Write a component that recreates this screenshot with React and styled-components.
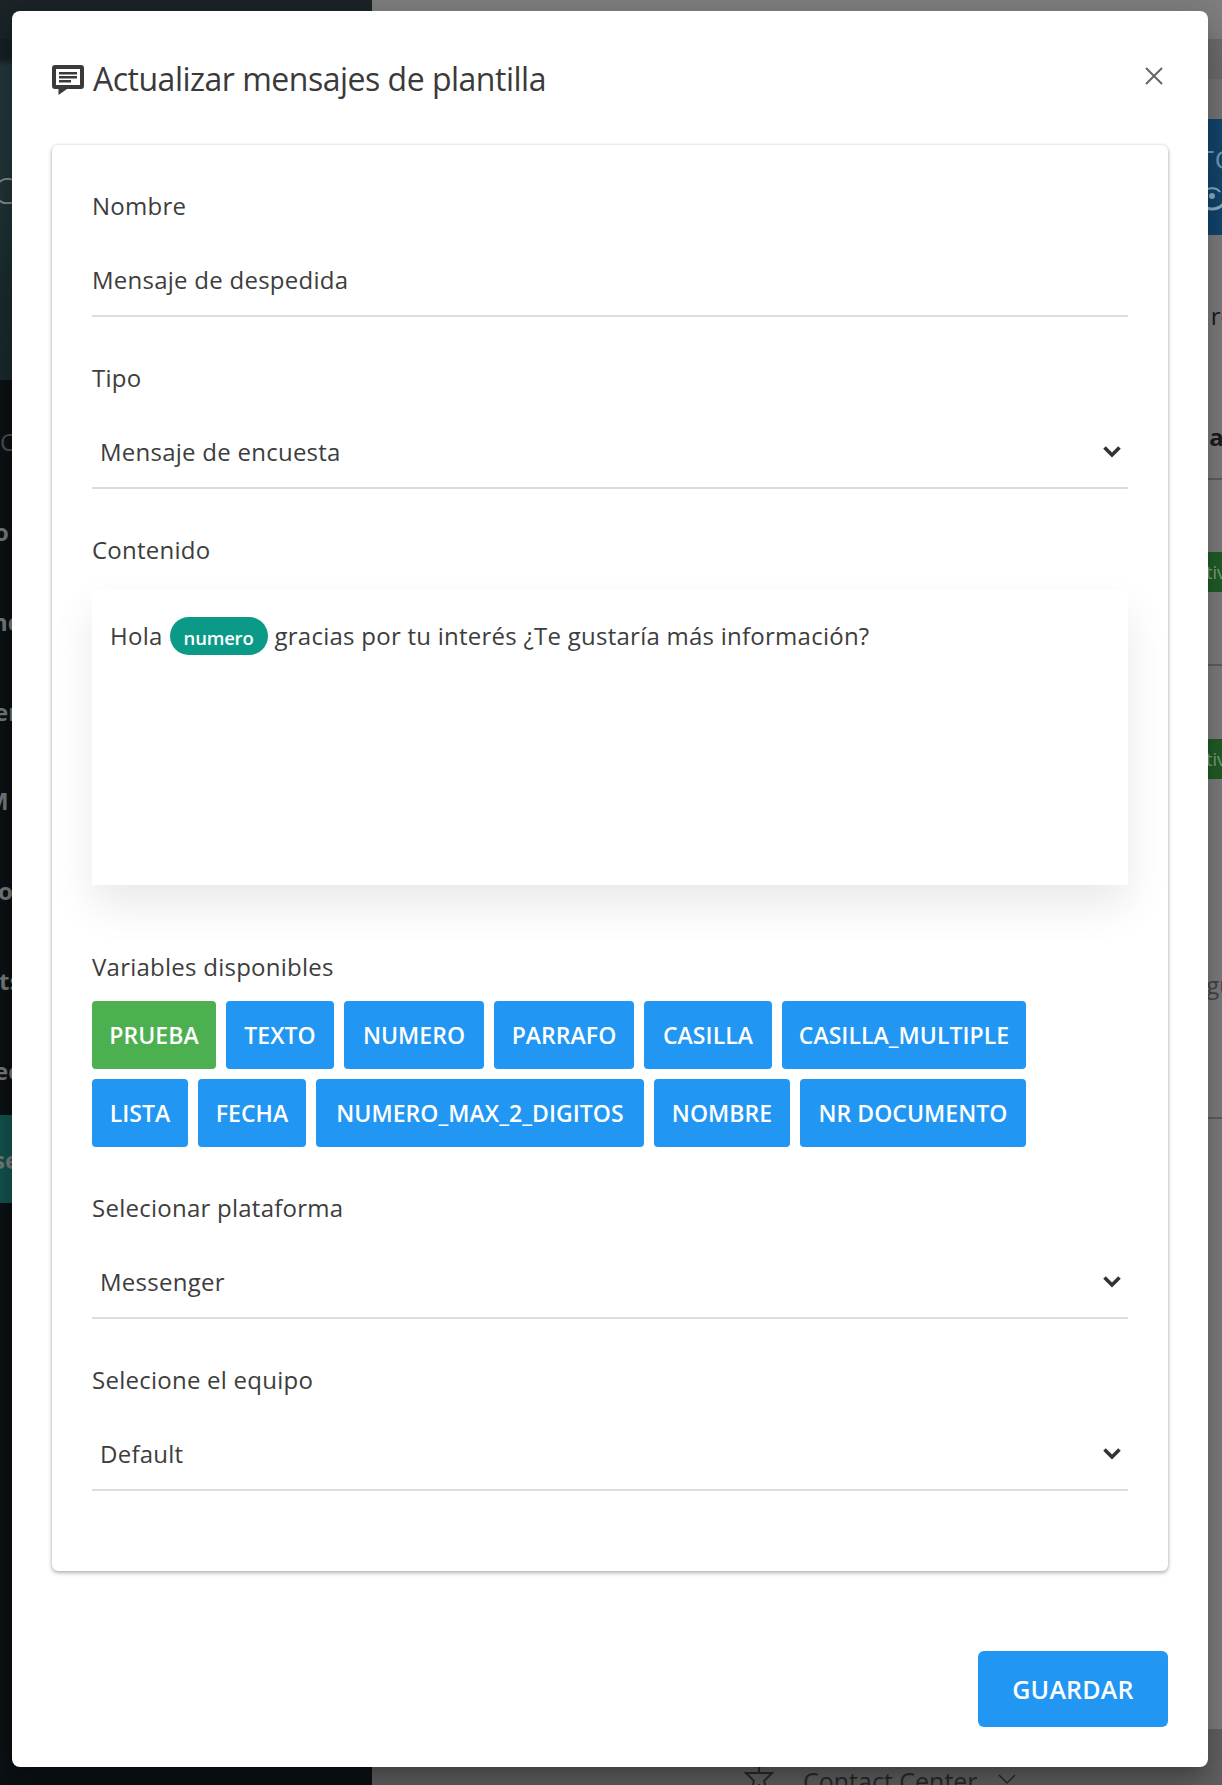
import React from 'react'
import styled, { createGlobalStyle } from 'styled-components'

const GlobalStyle = createGlobalStyle`
  html, body { margin: 0; padding: 0; height: 1785px; overflow: hidden; background: #7f7f7f; }
  * { box-sizing: border-box; }
`

const Page = styled.div`
  position: relative;
  display: grid;
  grid-template-columns: 372px 1fr;
  width: 1222px;
  height: 1785px;
  overflow: hidden;
  font-family: "Open Sans", "Liberation Sans", sans-serif;
`

const Sidebar = styled.aside`
  background: #0c1215;
  display: flex;
  flex-direction: column;
`

const SideHero = styled.div`
  height: 380px;
  padding-top: 165px;
  background: linear-gradient(#1b2427 0 39px, #162023 39px 58px, #23383c 66px, #223639 180px, #1b2d2f 290px, #1a2a2c);
  color: #8a8f8f;
  font-size: 36px;
  font-weight: 300;
  line-height: 52px;
  text-indent: -7px;
`

const SideList = styled.div`
  padding-top: 17px;
  display: flex;
  flex-direction: column;
`

const SideItem = styled.div`
  height: ${(p) => (p.$active ? 88 : 89.75)}px;
  display: flex;
  align-items: center;
  background: ${(p) => (p.$active ? '#13544d' : 'transparent')};
`

const SideText = styled.span`
  font-size: 24px;
  font-weight: ${(p) => (p.$dim ? 400 : 700)};
  color: ${(p) => (p.$dim ? '#4d5254' : '#777c7d')};
  margin-left: ${(p) => p.$offset}px;
  white-space: nowrap;
`

const Main = styled.main`
  display: flex;
  flex-direction: column;
  background: #7f7f7f;
  overflow: hidden;
`

const TopStrip = styled.div`
  height: ${(p) => p.$h}px;
  background: ${(p) => p.$bg};
`

const BlueBand = styled.div`
  height: 116px;
  background: #13476f;
  padding: 22px 0 0;
  display: flex;
  flex-direction: column;
  align-items: flex-end;
  color: #7a9db6;
  font-size: 26px;
  line-height: 36px;
  overflow: hidden;
`

const BandText = styled.span`
  margin-right: -14px;
  letter-spacing: 1px;
`

const BandIcon = styled.svg`
  margin: 10px -6px 0 0;
`

const TableRow = styled.div`
  height: ${(p) => p.$h}px;
  flex: none;
  border-bottom: ${(p) => (p.$line ? '2px solid #606060' : '0')};
  display: flex;
  align-items: center;
  justify-content: flex-end;
  font-size: 24px;
  font-weight: ${(p) => (p.$bold ? 700 : 400)};
  color: ${(p) => p.$color || '#1c1c1c'};
  overflow: hidden;
`

const CutText = styled.span`
  margin-right: ${(p) => p.$cut}px;
`

const Status = styled.span`
  height: 40px;
  margin-right: -4px;
  padding-left: 24px;
  background: #215f28;
  color: #83a386;
  font-size: 18px;
  line-height: 40px;
`

const BottomBar = styled.div`
  margin-top: auto;
  height: 56px;
  flex: none;
  background: #636363;
  display: flex;
  align-items: flex-start;
  padding: 36px 0 0 372px;
  color: #2b2b2b;
  font-size: 25px;
  line-height: 32px;
`

const BottomIcon = styled.svg`
  margin-top: -2px;
  margin-right: 29px;
`

const BottomChevron = styled.svg`
  margin: 8px 0 0 20px;
`

const Modal = styled.section`
  position: absolute;
  left: 12px;
  top: 11px;
  width: 1196px;
  height: 1756px;
  background: #fff;
  border-radius: 8px;
  box-shadow: 0 11px 15px -7px rgba(0,0,0,.2), 0 24px 38px 3px rgba(0,0,0,.14), 0 9px 46px 8px rgba(0,0,0,.12);
  padding: 0 40px;
  display: flex;
  flex-direction: column;
  color: #3a3a3a;
`

const ModalHeader = styled.header`
  height: 134px;
  flex: none;
  padding-top: 49px;
  display: flex;
  align-items: flex-start;
  justify-content: space-between;
`

const Title = styled.h2`
  margin: 0;
  display: flex;
  align-items: center;
  gap: 9px;
  font-size: 32px;
  line-height: 38px;
  font-weight: 400;
  letter-spacing: -0.5px;
  color: #3a3a3a;
`

const TitleIcon = styled.svg`
  margin-top: 2px;
  flex: none;
`

const CloseButton = styled.button`
  border: 0;
  background: none;
  padding: 0;
  margin: 7px 5px 0 0;
  width: 18px;
  height: 18px;
  display: block;
  color: #666;
`

const Card = styled.div`
  height: 1426px;
  flex: none;
  background: #fff;
  border-radius: 6px;
  box-shadow: 0 2px 4px rgba(0,0,0,.28), 0 0 3px rgba(0,0,0,.14);
  padding: 40px 40px 0;
  display: flex;
  flex-direction: column;
`

const Label = styled.div`
  font-size: 24px;
  line-height: 42px;
  letter-spacing: 0.25px;
  color: #3d3d3d;
`

const Field = styled.div`
  height: 90px;
  flex: none;
  margin-bottom: ${(p) => p.$mb}px;
  padding: 16px 7px 0 ${(p) => (p.$select ? 8 : 0)}px;
  border-bottom: 2px solid #dcdcdc;
  display: flex;
  align-items: center;
  justify-content: space-between;
  font-size: 24px;
  letter-spacing: 0.25px;
  color: #3d3d3d;
`

const Editor = styled.div`
  height: 295px;
  flex: none;
  margin-top: 19px;
  padding: 27px 18px;
  background: #fff;
  box-shadow: 0 20px 40px rgba(0,0,0,.09);
  display: flex;
  align-items: flex-start;
  gap: 7px;
  font-size: 24px;
  line-height: 38px;
  letter-spacing: 0.25px;
  color: #3d3d3d;
`

const Chip = styled.span`
  height: 38px;
  width: 98px;
  border-radius: 19px;
  background: #0b9a88;
  color: #fff;
  font-size: 18.5px;
  font-weight: 600;
  letter-spacing: -0.2px;
  line-height: 41px;
  text-align: center;
`

const VariablesLabel = styled(Label)`
  margin-top: 61px;
  margin-bottom: 13px;
`

const Variables = styled.div`
  width: 936px;
  display: flex;
  flex-wrap: wrap;
  gap: 10px;
  margin-bottom: 40px;
`

const VariableButton = styled.button`
  width: ${(p) => p.$w}px;
  height: 68px;
  padding: 0;
  border: 0;
  border-radius: 4px;
  background: ${(p) => (p.$active ? '#4caf50' : '#2196f3')};
  color: #fff;
  font-family: inherit;
  font-size: 23px;
  font-weight: 600;
  letter-spacing: 0.05px;
  white-space: nowrap;
`

const Footer = styled.footer`
  display: flex;
  justify-content: flex-end;
  margin-top: 80px;
`

const SaveButton = styled.button`
  width: 190px;
  height: 76px;
  border: 0;
  border-radius: 6px;
  background: #2196f3;
  color: #fff;
  font-family: inherit;
  font-size: 25px;
  font-weight: 600;
  letter-spacing: 0.2px;
`

const Chevron = () => (
  <svg width="18" height="13" viewBox="0 0 18 13" fill="none" stroke="#333" strokeWidth="3.6">
    <path d="M1.5 2.5 L9 10 L16.5 2.5" />
  </svg>
)

const MessageIcon = () => (
  <TitleIcon width="32" height="30" viewBox="0 0 32 30">
    <path
      fill="#3a3a3a"
      fillRule="evenodd"
      d="M3 0h26a3 3 0 0 1 3 3v18a3 3 0 0 1-3 3H15l-8.500 6v-6H3a3 3 0 0 1-3-3V3a3 3 0 0 1 3-3zM4 4v16h24V4z"
    />
    <path fill="#3a3a3a" d="M7 7h18v2.400H7zM7 11h18v2.400H7zM7 15h12v2.400H7z" />
  </TitleIcon>
)

const CloseIcon = () => (
  <svg width="18" height="18" viewBox="0 0 18 18" fill="none" stroke="currentColor" strokeWidth="2">
    <path d="M1 1 L17 17 M17 1 L1 17" />
  </svg>
)

const sideItems = [
  { text: 'C', offset: 0, dim: true },
  { text: 'o', offset: -6 },
  { text: 'nd', offset: -8 },
  { text: 'er', offset: -6 },
  { text: 'M', offset: -14 },
  { text: 'o', offset: -2 },
  { text: 'ts', offset: -1 },
  { text: 'ec', offset: -6 },
]

const variables = [
  { name: 'PRUEBA', w: 124, active: true },
  { name: 'TEXTO', w: 108 },
  { name: 'NUMERO', w: 140 },
  { name: 'PARRAFO', w: 140 },
  { name: 'CASILLA', w: 128 },
  { name: 'CASILLA_MULTIPLE', w: 244 },
  { name: 'LISTA', w: 96 },
  { name: 'FECHA', w: 108 },
  { name: 'NUMERO_MAX_2_DIGITOS', w: 328 },
  { name: 'NOMBRE', w: 136 },
  { name: 'NR DOCUMENTO', w: 226 },
]

export default function App() {
  return (
    <Page>
      <GlobalStyle />
      <Sidebar>
        <SideHero>C</SideHero>
        <SideList>
          {sideItems.map((item, i) => (
            <SideItem key={i}>
              <SideText $offset={item.offset} $dim={item.dim}>{item.text}</SideText>
            </SideItem>
          ))}
          <SideItem $active>
            <SideText $offset={-7}>se</SideText>
          </SideItem>
        </SideList>
      </Sidebar>
      <Main>
        <TopStrip $h={39} $bg="#7f7f7f" />
        <TopStrip $h={40} $bg="#6e6e6e" />
        <TopStrip $h={40} $bg="#767676" />
        <BlueBand>
          <BandText>TO</BandText>
          <BandIcon width="32" height="24" viewBox="0 0 32 24" fill="none" stroke="#8fb0c7" strokeWidth="3">
            <path d="M2 10a14 12 0 0 0 28 0" />
            <path d="M8 5a9 7 0 0 1 16 0" strokeWidth="2" />
            <circle cx="16" cy="9" r="3" fill="#8fb0c7" stroke="none" />
          </BandIcon>
        </BlueBand>
        <TableRow $h={160}><CutText $cut={-12}>re</CutText></TableRow>
        <TableRow $h={85} $bold $line><CutText $cut={-14}>ac</CutText></TableRow>
        <TableRow $h={186} $line><Status>tiv</Status></TableRow>
        <TableRow $h={186}><Status>tiv</Status></TableRow>
        <TableRow $h={267} $line $color="#474747"><CutText $cut={-12}>gu</CutText></TableRow>
        <BottomBar>
          <BottomIcon width="30" height="30" viewBox="0 0 30 30" fill="none" stroke="#2b2b2b" strokeWidth="2">
            <path d="M15 10V1M11 4l4-3 4 3M2 10h26l-8 8 3 10-8-6-8 6 3-10z" />
          </BottomIcon>
          Contact Center
          <BottomChevron width="18" height="12" viewBox="0 0 18 12" fill="none" stroke="#2b2b2b" strokeWidth="1.500">
            <path d="M1 2l8 8 8-8" />
          </BottomChevron>
        </BottomBar>
      </Main>
      <Modal>
        <ModalHeader>
          <Title>
            <MessageIcon />
            Actualizar mensajes de plantilla
          </Title>
          <CloseButton aria-label="Cerrar">
            <CloseIcon />
          </CloseButton>
        </ModalHeader>
        <Card>
          <Label>Nombre</Label>
          <Field $mb={40}>Mensaje de despedida</Field>
          <Label>Tipo</Label>
          <Field $mb={40} $select>
            Mensaje de encuesta
            <Chevron />
          </Field>
          <Label>Contenido</Label>
          <Editor>
            Hola
            <Chip>numero</Chip>
            gracias por tu interés ¿Te gustaría más información?
          </Editor>
          <VariablesLabel>Variables disponibles</VariablesLabel>
          <Variables>
            {variables.map((v) => (
              <VariableButton key={v.name} $w={v.w} $active={v.active}>{v.name}</VariableButton>
            ))}
          </Variables>
          <Label>Selecionar plataforma</Label>
          <Field $mb={40} $select>
            Messenger
            <Chevron />
          </Field>
          <Label>Selecione el equipo</Label>
          <Field $mb={0} $select>
            Default
            <Chevron />
          </Field>
        </Card>
        <Footer>
          <SaveButton>GUARDAR</SaveButton>
        </Footer>
      </Modal>
    </Page>
  )
}
